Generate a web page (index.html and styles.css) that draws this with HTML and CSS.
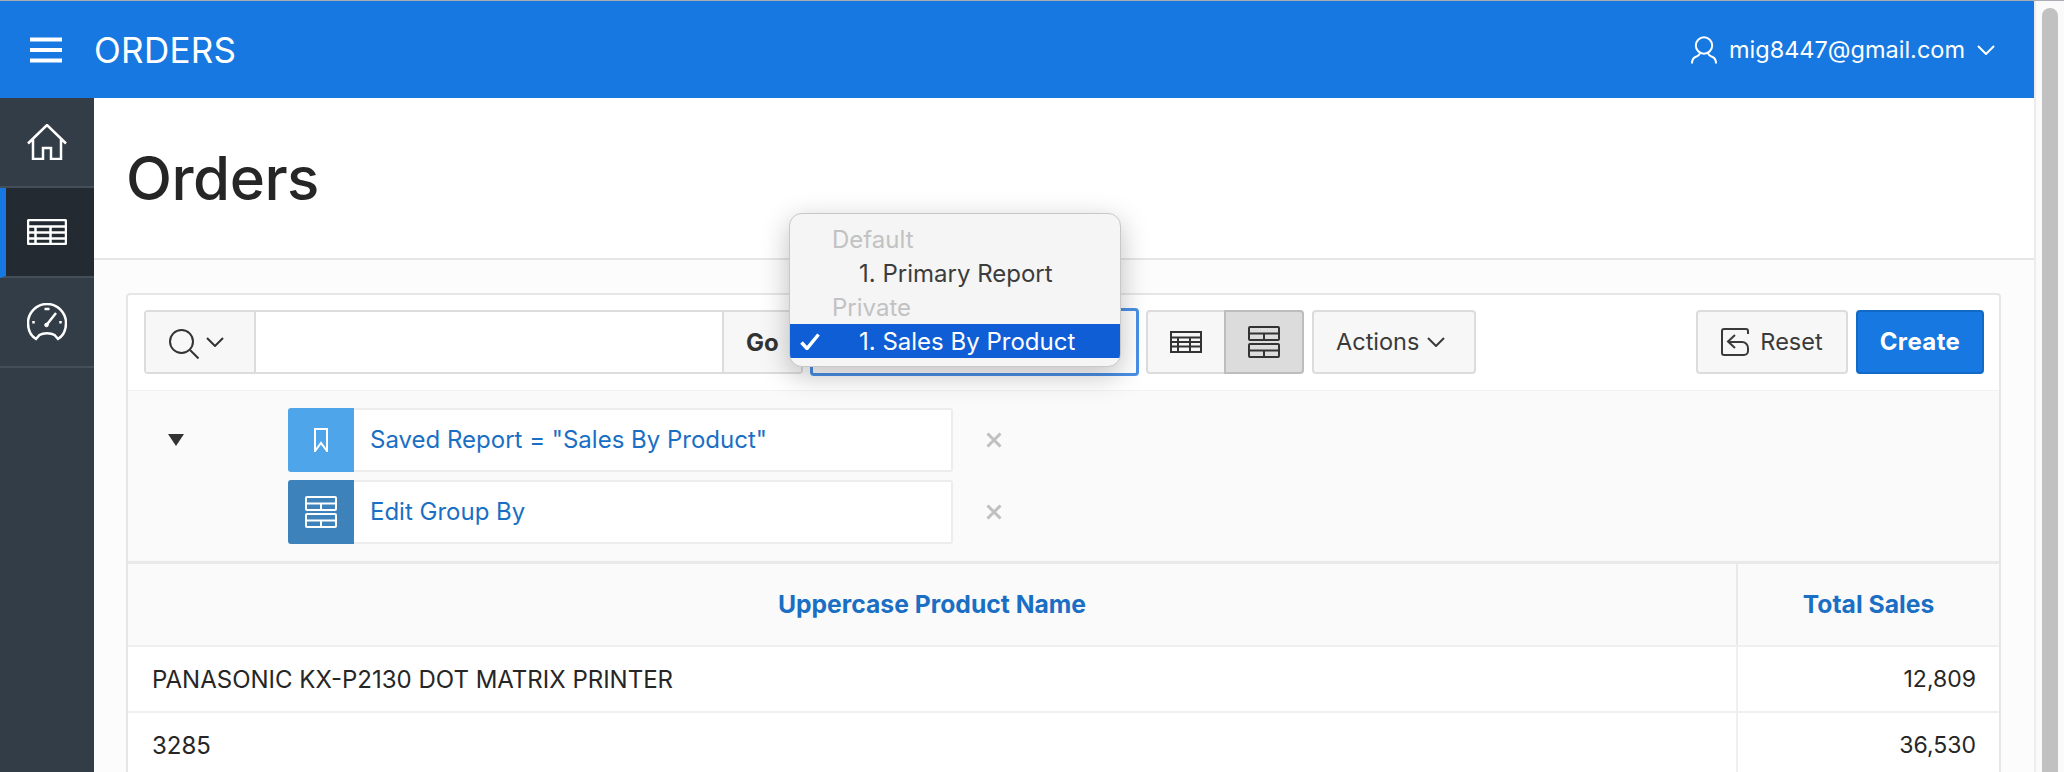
FILE: index.html
```html
<!DOCTYPE html>
<html lang="en">
<head>
<meta charset="utf-8">
<title>Orders</title>
<link rel="stylesheet" href="styles.css">
</head>
<body>
<div class="shell">
  <header class="topbar">
    <svg class="burger" viewBox="0 0 32 26"><path d="M0 2.500h32M0 13h32M0 23.500h32"/></svg>
    <div class="app-name">ORDERS</div>
    <div class="user">
      <svg class="user-icon" viewBox="0 0 26 28"><circle cx="13" cy="9.500" r="8.200"/><path d="M9 16.500c0 2.500-2 3.500-4.500 4.500C2 22 1 24 1 27.500M17 16.500c0 2.500 2 3.500 4.500 4.500 2.500 1 3.500 3 3.500 6.500"/></svg>
      <span>mig8447@gmail.com</span>
      <svg class="chev chev-user" viewBox="0 0 18 10"><path d="M1 1l8 8 8-8"/></svg>
    </div>
  </header>
  <div class="body">
    <nav class="side">
      <div class="nav-item">
        <svg class="nav-icon" viewBox="0 0 40 36"><path d="M1 19.500L20 1l19 18.500M6 15v20h10v-11h8v11h10V15"/></svg>
      </div>
      <div class="nav-item active">
        <svg class="nav-icon" viewBox="0 0 40 26"><rect x="1" y="1" width="38" height="24" rx="1.500"/><path d="M1 7.500h38M1 13.500h38M1 19.500h38M8.500 7.500V25M23.500 7.500V25"/></svg>
      </div>
      <div class="nav-item">
        <svg class="nav-icon" viewBox="0 0 40 38"><path d="M9 36C4 33 1 27 1 20a19 19 0 0 1 38 0c0 7-3 13-8 16l-3.500-4c-3.500-2.500-11.500-2.500-15 0z"/><path d="M19.500 22L29 10M17.500 6h5M6.500 18v2.500M33.500 18v2.500"/><circle class="hub" cx="19.500" cy="22" r="1.800"/></svg>
      </div>
    </nav>
    <main class="main">
      <div class="hero"><h1>Orders</h1></div>
      <div class="content">
        <section class="card">
          <div class="toolbar">
            <div class="search">
              <div class="search-btn">
                <svg class="mag" viewBox="0 0 30 30"><circle cx="12.500" cy="12.500" r="11.500"/><path d="M21 21l8.500 8.500"/></svg>
                <svg class="chev chev-sm" viewBox="0 0 18 10"><path d="M1 1l8 8 8-8"/></svg>
              </div>
              <div class="search-input"></div>
              <div class="go">Go</div>
            </div>
            <div class="select">
              <div class="menu">
                <div class="menu-group">Default</div>
                <div class="menu-opt">1. Primary Report</div>
                <div class="menu-group">Private</div>
                <div class="menu-opt selected"><svg class="tick" viewBox="0 0 20 17"><path d="M1.500 9.500l5.500 6L18.500 1.500"/></svg>1. Sales By Product</div>
              </div>
            </div>
            <div class="views">
              <div class="view">
                <svg class="view-grid" viewBox="0 0 32 22"><rect x="1" y="1" width="30" height="20"/><path d="M1 6.500h30M1 11h30M1 15.500h30M8 6.500V21M20 6.500V21"/></svg>
              </div>
              <div class="view on">
                <svg class="view-group" viewBox="0 0 32 32"><rect x="1" y="1" width="30" height="13" rx="1"/><path d="M1 7.500h30M16 7.500V14"/><rect x="1" y="18" width="30" height="13" rx="1"/><path d="M1 24.500h30M16 24.500V31"/></svg>
              </div>
            </div>
            <div class="btn actions">Actions<svg class="chev chev-sm" viewBox="0 0 18 10"><path d="M1 1l8 8 8-8"/></svg></div>
            <div class="btn reset">
              <svg class="reset-icon" viewBox="0 0 28 28"><path d="M27 6V3a2 2 0 0 0-2-2H3a2 2 0 0 0-2 2v22a2 2 0 0 0 2 2h20a4 4 0 0 0 4-4v-3a6 6 0 0 0-6-6H8M14 7l-7 6.500 7 6.500"/></svg>
              Reset
            </div>
            <div class="btn create">Create</div>
          </div>
          <div class="filters">
            <div class="tri"></div>
            <div class="chips">
              <div class="chip-row">
                <div class="chip">
                  <div class="chip-icon saved"><svg class="bookmark" viewBox="0 0 14 24"><path d="M1 1h12v22l-6-8-6 8z"/></svg></div>
                  <div class="chip-text">Saved Report = "Sales By Product"</div>
                </div>
                <svg class="close" viewBox="0 0 16 16"><path d="M1.500 1.500l13 13M14.500 1.500l-13 13"/></svg>
              </div>
              <div class="chip-row">
                <div class="chip">
                  <div class="chip-icon group"><svg class="chip-group" viewBox="0 0 32 32"><rect x="1" y="1" width="30" height="13" rx="1"/><path d="M1 7.500h30M16 7.500V14"/><rect x="1" y="18" width="30" height="13" rx="1"/><path d="M1 24.500h30M16 24.500V31"/></svg></div>
                  <div class="chip-text">Edit Group By</div>
                </div>
                <svg class="close" viewBox="0 0 16 16"><path d="M1.500 1.500l13 13M14.500 1.500l-13 13"/></svg>
              </div>
            </div>
          </div>
          <table class="report">
            <thead>
              <tr><th class="c1">Uppercase Product Name</th><th class="c2">Total Sales</th></tr>
            </thead>
            <tbody>
              <tr><td>PANASONIC KX-P2130 DOT MATRIX PRINTER</td><td class="num">12,809</td></tr>
              <tr><td>3285</td><td class="num">36,530</td></tr>
            </tbody>
          </table>
        </section>
      </div>
    </main>
  </div>
</div>
<div class="scroll"><div class="thumb"></div></div>
</body>
</html>
```

FILE: styles.css
```css
* { box-sizing: border-box; }
html, body { height: 100%; }
html { overflow: hidden; }
body {
  margin: 0;
  height: 772px;
  overflow: hidden;
  display: flex;
  font-family: Inter, "Liberation Sans", sans-serif;
  color: #262626;
  background: #fff;
  border-top: 1px solid #a9adb2;
}
svg { fill: none; stroke: currentColor; display: block; flex: none; }

.shell { width: 2034px; flex: none; display: flex; flex-direction: column; min-height: 0; overflow: hidden; }
.scroll { flex: 1; background: #fafafa; border-left: 2px solid #ececec; padding: 7px 6px 0 6px; overflow: hidden; display: flex; }
.thumb { flex: 1; background: #c1c1c1; border-radius: 8px 8px 0 0; }

.topbar { height: 97px; flex: none; background: #1678e0; color: #fff; display: flex; align-items: center; padding: 0 39px 0 30px; }
.burger { width: 32px; height: 26px; stroke-width: 4; }
.app-name { font-size: 35px; margin-left: 32px; letter-spacing: .3px; }
.user { margin-left: auto; display: flex; align-items: center; font-size: 23.500px; }
.user-icon { width: 26px; height: 28px; stroke-width: 2; margin-right: 12px; }
.chev { stroke-width: 2; }
.chev-user { width: 18px; height: 10px; margin-left: 12px; }

.body { flex: 1; display: flex; min-height: 0; overflow: hidden; }
.side { width: 94px; flex: none; background: #323d47; }
.nav-item { height: 90px; border-bottom: 2px solid #434e58; color: #fff; display: flex; align-items: center; justify-content: center; }
.nav-item.active { background: #232a31; border-left: 6px solid #1678e0; padding-right: 6px; }
.nav-icon { width: 40px; stroke-width: 2.500; }
.hub { fill: #fff; stroke-width: 1; }

.main { flex: 1; min-width: 0; display: flex; flex-direction: column; }
.hero { height: 162px; flex: none; border-bottom: 2px solid #e6e6e6; padding: 0 32px; display: flex; align-items: center; }
h1 { margin: 0 0 1px; font-size: 60px; font-weight: 500; letter-spacing: -0.5px; color: #262626; }
.content { flex: 1; background: #fcfcfc; padding: 33px 33px 0 32px; min-height: 0; }

.card { background: #fff; border: 2px solid #e6e6e6; border-bottom: 0; border-radius: 4px 4px 0 0; }
.toolbar { height: 95px; display: flex; align-items: flex-start; padding: 15px 15px 0 16px; }
.search { width: 659px; height: 64px; display: flex; border: 2px solid #dcdcdc; border-radius: 4px; }
.search-btn { width: 110px; background: #f7f7f7; border-right: 2px solid #dcdcdc; display: flex; align-items: center; padding-left: 23px; gap: 7px; color: #333; }
.mag { width: 30px; height: 30px; stroke-width: 2; margin-top: 3px; }
.chev-sm { width: 18px; height: 10px; }
.search-input { flex: 1; background: #fff; }
.go { width: 79px; background: #f7f7f7; border-left: 2px solid #dcdcdc; font-weight: 700; font-size: 24px; color: #333; display: flex; align-items: center; padding-left: 22px; }

.select { position: relative; width: 329px; height: 68px; margin: -2px 7px 0; border: 3px solid #4a90e6; border-radius: 4px; background: #fff; }
.menu { position: absolute; left: -24px; top: -98px; width: 332px; height: 154px; background: #f5f5f5; border: 1px solid #c8c8c8; border-radius: 13px; box-shadow: 0 8px 28px rgba(0,0,0,.25); padding-top: 8px; font-size: 24px; z-index: 5; overflow: hidden; }
.menu-group { height: 34px; line-height: 36px; padding-left: 42px; color: #c2c2c2; }
.menu-opt { height: 34px; line-height: 36px; padding-left: 69px; color: #3c3c3c; position: relative; }
.menu-opt.selected { background: #0f5ed6; color: #fff; }
.tick { position: absolute; left: 10px; top: 9px; width: 20px; height: 17px; stroke-width: 3.500; }

.views { display: flex; width: 158px; height: 64px; border: 2px solid #dcdcdc; border-radius: 4px; background: #f7f7f7; }
.view { flex: 1; display: flex; align-items: center; justify-content: center; color: #333; }
.view.on { background: #dcdcdc; border: 2px solid #bdbdbd; margin: -2px -2px -2px 0; border-radius: 0 4px 4px 0; }
.view-grid { width: 32px; height: 22px; stroke-width: 2; }
.view-group { width: 32px; height: 32px; stroke-width: 2; }

.btn { height: 64px; display: flex; align-items: center; justify-content: center; border: 2px solid #dcdcdc; border-radius: 4px; background: #f7f7f7; font-size: 23.500px; color: #3a3a3a; padding-bottom: 1px; }
.actions { width: 164px; margin-left: 8px; gap: 8px; justify-content: flex-start; padding-left: 22px; }
.reset { width: 152px; margin-left: auto; gap: 11px; }
.reset-icon { width: 28px; height: 28px; stroke-width: 2; }
.create { width: 128px; margin-left: 8px; background: #1678e0; border-color: #1269c6; color: #fff; font-weight: 700; font-size: 24px; letter-spacing: .4px; }

.filters { height: 174px; background: #fafafa; border-top: 1px solid #f2f2f2; border-bottom: 3px solid #e9e9e9; display: flex; padding: 17px 0 0 0; }
.tri { width: 0; height: 0; margin: 26px 0 0 40px; border-left: 8px solid transparent; border-right: 8px solid transparent; border-top: 12px solid #333; }
.chips { margin-left: 104px; display: flex; flex-direction: column; gap: 8px; }
.chip-row { display: flex; align-items: center; }
.chip { width: 665px; height: 64px; display: flex; background: #fff; border: 2px solid #ededed; border-left: 0; border-radius: 3px; }
.chip-icon { width: 66px; margin: -2px 0; display: flex; align-items: center; justify-content: center; color: #fff; border-radius: 3px 0 0 3px; }
.saved { background: #4ea5ea; }
.group { background: #3e82bb; }
.bookmark { width: 16px; height: 24px; stroke-width: 2; }
.chip-group { width: 32px; height: 32px; stroke-width: 2; }
.chip-text { padding-left: 16px; padding-bottom: 1px; font-size: 24px; color: #1a6fc4; display: flex; align-items: center; }
.close { margin-left: 33px; width: 16px; height: 16px; color: #c0c0c0; stroke-width: 3; }

.report { width: 100%; border-collapse: collapse; table-layout: fixed; font-size: 24px; }
.report th { height: 82px; background: #fafafa; font-weight: 700; color: #1a6fc4; font-size: 24.700px; border-bottom: 2px solid #efefef; padding-bottom: 2px; }
.c2 { width: 262px; border-left: 2px solid #e9e9e9; }
.report td { height: 66px; padding: 0 24px; border-bottom: 2px solid #efefef; color: #262626; }
.report td.num { text-align: right; border-left: 2px solid #efefef; font-size: 23px; padding-right: 23px; }
```
